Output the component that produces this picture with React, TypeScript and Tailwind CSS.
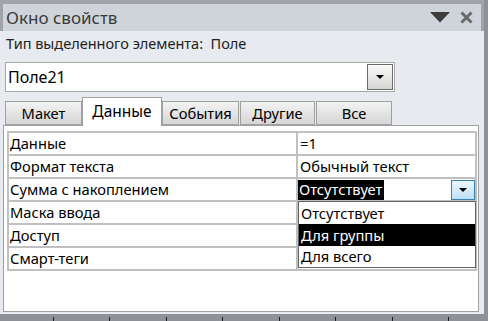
import React from "react";

const rows = [
  { name: "Данные", value: "=1" },
  { name: "Формат текста", value: "Обычный текст" },
  { name: "Сумма с накоплением", value: "Отсутствует", open: true },
  { name: "Маска ввода", value: "" },
  { name: "Доступ", value: "" },
  { name: "Смарт-теги", value: "" },
];

const tabs = ["Макет", "Данные", "События", "Другие", "Все"];
const tabWidths = ["w-[77px]", "w-[80px]", "w-[77px]", "w-[75px]", "w-[76px]"];
const ticks = [53, 109, 166, 222, 279, 335, 392, 448];

const App = () => {
  return (
    <div
      className="relative w-[488px] h-[321px] bg-[#8e9196] overflow-hidden"
      style={{ fontFamily: '"Noto Sans", "Open Sans", sans-serif' }}
    >
      <div className="w-[484px] h-[314px] flex flex-col bg-[#e7eaee]">
        {/* title */}
        <div className="bg-[#a0a4a9] pt-[4px] px-[3px]">
          <div className="h-[27px] bg-[#cfd4db] flex items-center pl-[3px] pr-[8px]">
            <span className="text-[17px] text-[#3a3a3a] leading-none">Окно свойств</span>
            <svg className="ml-auto" width="20" height="11" viewBox="0 0 20 11">
              <path d="M0 0 H20 L10 10.5 Z" fill="#3c3c3c" />
            </svg>
            <svg className="ml-[10px]" width="13" height="13" viewBox="0 0 13 13">
              <path d="M1.5 1.5 L11.5 11.5 M11.5 1.5 L1.5 11.5" stroke="#6a6a6a" strokeWidth="3" />
            </svg>
          </div>
        </div>

        <div className="h-[26px] flex items-center pl-[6px] text-[14.5px] text-[#222]">
          Тип выделенного элемента:&nbsp; Поле
        </div>

        {/* combobox */}
        <div className="mt-[5px] ml-[5px] w-[390px] h-[30px] border border-[#a8a8a8] bg-white flex items-center">
          <span className="pl-[2px] text-[16px] text-black">Поле21</span>
          <div className="ml-auto mr-[1px] w-[26px] h-[26px] border border-[#6a6a6a] bg-gradient-to-b from-[#fafafa] to-[#d6d6d6] flex items-center justify-center">
            <svg width="8" height="4" viewBox="0 0 8 4">
              <path d="M0 0 H8 L4 4 Z" fill="#000" />
            </svg>
          </div>
        </div>

        {/* tabs */}
        <div className="mt-[5px] h-[28px] pl-[5px] flex items-end relative z-10">
          {tabs.map((t, i) =>
            i === 1 ? (
              <div
                key={t}
                className={`${tabWidths[i]} h-[29px] -mb-[1px] bg-white border border-b-0 border-[#a0a0a0] flex items-center justify-center text-[15.5px] text-black`}
              >
                {t}
              </div>
            ) : (
              <div
                key={t}
                className={`${tabWidths[i]} ${i > 2 ? "ml-[1px]" : ""} h-[24px] bg-gradient-to-b from-[#f3f3f3] to-[#d6d6d6] border border-[#a0a0a0] flex items-center justify-center text-[14.7px] text-black`}
              >
                {t}
              </div>
            )
          )}
        </div>

        {/* panel */}
        <div className="ml-[3px] w-[476px] h-[187px] border border-[#a0a0a0] bg-white pt-[5px] pl-[3px]">
          <div className="relative w-[470px] bg-[#c0c0c0] p-[2px] grid grid-cols-[287px_177px] gap-[2px]">
            {rows.map((r) => (
              <React.Fragment key={r.name}>
                <div className="h-[21px] bg-white pl-[1px] flex items-center text-[14.7px] text-black whitespace-nowrap">
                  {r.name}
                </div>
                {r.open ? (
                  <div className="h-[21px] bg-white flex items-center">
                    <span className="h-[20px] w-[86px] bg-black text-white text-[14.7px] flex items-center pl-[1px] whitespace-nowrap">
                      {r.value}
                    </span>
                    <div className="ml-auto w-[24px] h-[20px] border border-[#3c7fb1] bg-gradient-to-b from-[#eaf6fd] to-[#bee1f6] flex items-center justify-center">
                      <svg width="8" height="4" viewBox="0 0 8 4">
                        <path d="M0 0 H8 L4 4 Z" fill="#000" />
                      </svg>
                    </div>
                  </div>
                ) : (
                  <div className="h-[21px] bg-white pl-[2px] flex items-center text-[14.7px] text-black whitespace-nowrap">
                    {r.value}
                  </div>
                )}
              </React.Fragment>
            ))}

            {/* dropdown list */}
            <div className="absolute left-[291px] top-[70px] w-[178px] h-[67px] bg-white border border-[#646464] flex flex-col text-[14.7px]">
              <div className="h-[22px] flex items-center pl-[2px] text-black">Отсутствует</div>
              <div className="h-[22px] flex items-center pl-[2px] bg-black text-white">Для группы</div>
              <div className="h-[21px] flex items-center pl-[2px] text-black">Для всего</div>
            </div>
          </div>
        </div>
      </div>

      {ticks.map((x) => (
        <div key={x} className="absolute bottom-0 w-[1px] h-[4px] bg-[#202020]" style={{ left: x }} />
      ))}
    </div>
  );
};

export default App;
